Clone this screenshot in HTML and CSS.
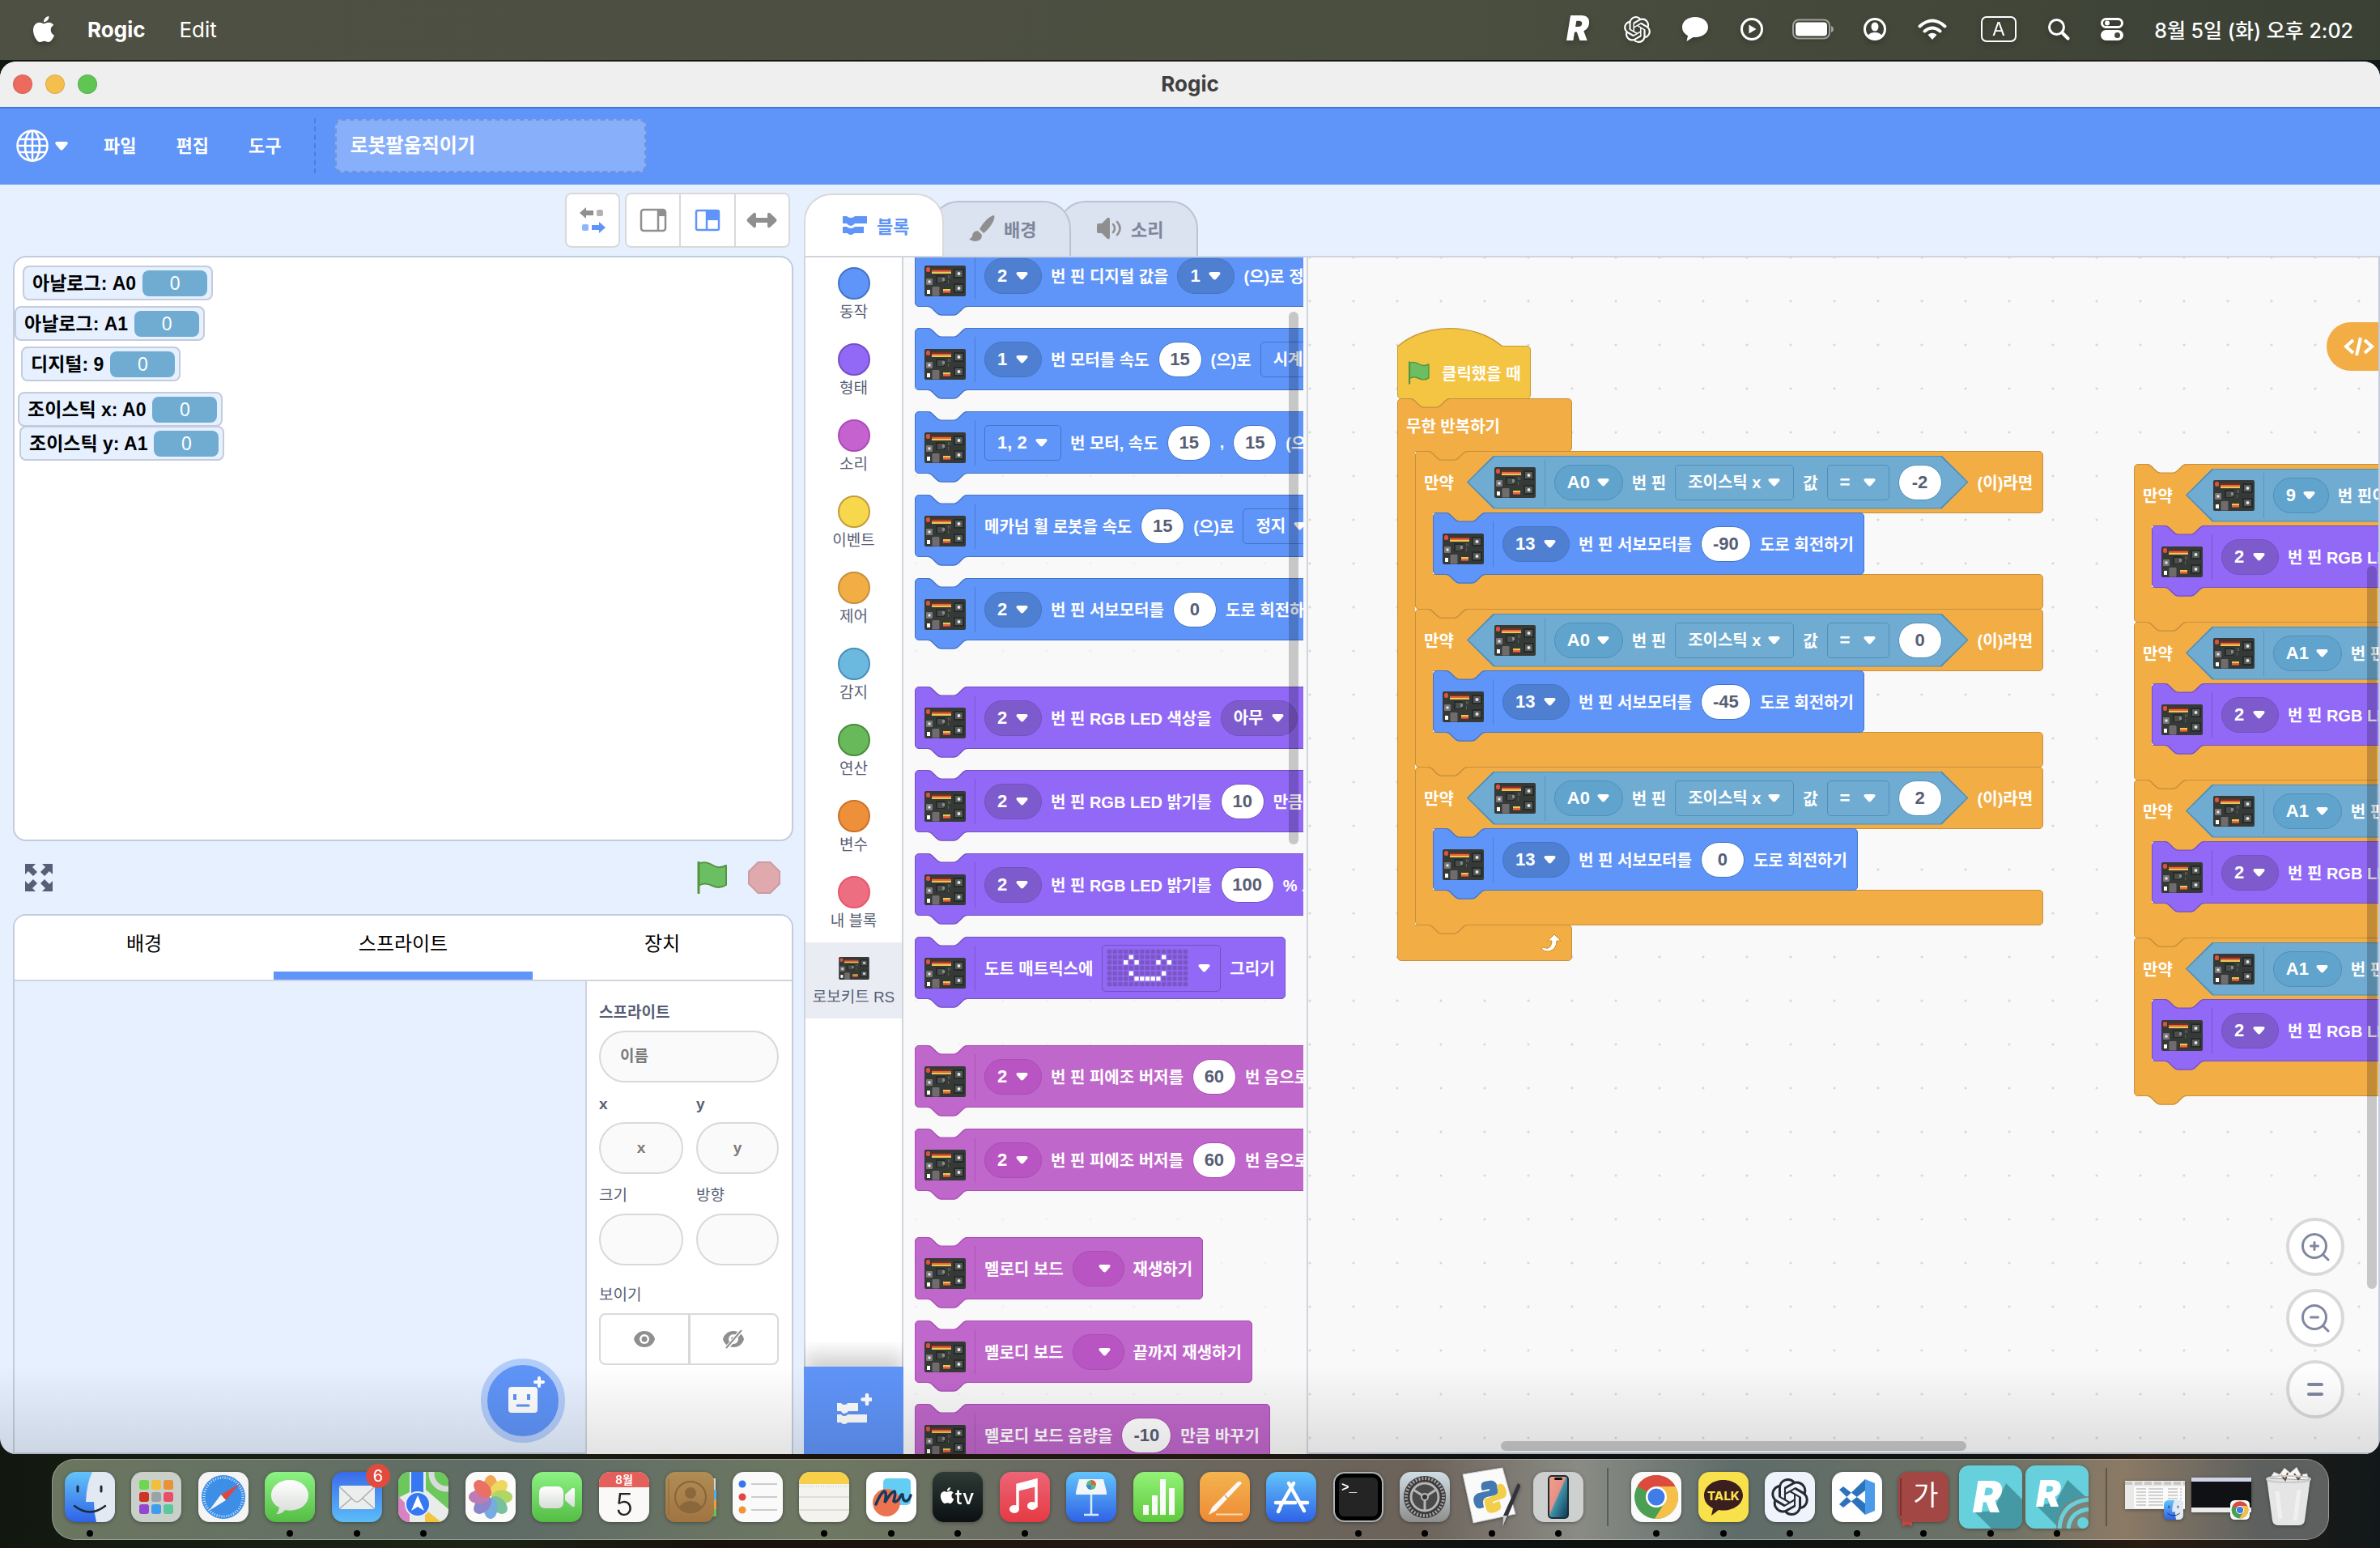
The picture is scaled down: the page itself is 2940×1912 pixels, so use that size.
FILE: index.html
```html
<!DOCTYPE html>
<html lang="ko">
<head>
<meta charset="utf-8">
<title>Rogic</title>
<link rel="stylesheet" href="styles.css">
</head>
<body>
<svg class="defs" aria-hidden="true">
  <defs>
    <linearGradient id="g-green" x1="0" y1="0" x2="0" y2="1"><stop offset="0" stop-color="#8cf283"/><stop offset="1" stop-color="#54bd44"/></linearGradient>
    <linearGradient id="g-white" x1="0" y1="0" x2="0" y2="1"><stop offset="0" stop-color="#fff"/><stop offset="1" stop-color="#d8dcd8"/></linearGradient>
    <linearGradient id="g-blue" x1="0" y1="0" x2="0" y2="1"><stop offset="0" stop-color="#62c4fb"/><stop offset="1" stop-color="#2f62e6"/></linearGradient>
    <linearGradient id="g-mail" x1="0" y1="0" x2="0" y2="1"><stop offset="0" stop-color="#3a6bea"/><stop offset="1" stop-color="#5cbdf8"/></linearGradient>
    <linearGradient id="g-red" x1="0" y1="0" x2="0" y2="1"><stop offset="0" stop-color="#ed6577"/><stop offset="1" stop-color="#e53a43"/></linearGradient>
    <linearGradient id="g-orange" x1="0" y1="0" x2="0" y2="1"><stop offset="0" stop-color="#f4b44e"/><stop offset="1" stop-color="#ee8a35"/></linearGradient>
    <linearGradient id="g-num" x1="0" y1="0" x2="0" y2="1"><stop offset="0" stop-color="#92f277"/><stop offset="1" stop-color="#5fc93d"/></linearGradient>
    <linearGradient id="g-brown" x1="0" y1="0" x2="0" y2="1"><stop offset="0" stop-color="#b08d55"/><stop offset="1" stop-color="#a07441"/></linearGradient>
    <linearGradient id="g-steel" x1="0" y1="0" x2="0" y2="1"><stop offset="0" stop-color="#cfdde4"/><stop offset="1" stop-color="#8e8e8e"/></linearGradient>
    <linearGradient id="g-dark" x1="0" y1="0" x2="0" y2="1"><stop offset="0" stop-color="#2d3a36"/><stop offset="1" stop-color="#0c1012"/></linearGradient>
    <linearGradient id="g-phone" x1="0" y1="0" x2="1" y2="1"><stop offset="0" stop-color="#f0a088"/><stop offset=".45" stop-color="#e88f86"/><stop offset=".5" stop-color="#3f93a8"/><stop offset="1" stop-color="#0d3a57"/></linearGradient>
    <clipPath id="tile"><rect width="62" height="62" rx="14"/></clipPath>
  </defs>
  <symbol id="board" viewBox="0 0 51 38">
    <rect width="51" height="38" rx="2" fill="#353a37"/>
    <rect x="2" y="2" width="5" height="6" rx="2" fill="#e2503a"/>
    <path d="M9 4h24v2H9z" fill="#7a2f25"/><path d="M9 6h24v2H9z" fill="#e8663c"/><path d="M9 8h24v2H9z" fill="#e9c950"/>
    <rect x="2" y="16" width="8" height="8" rx="1" fill="#77757a"/><rect x="4.500" y="18.500" width="3" height="3" fill="#e8e8e8"/>
    <path d="M14 12h11v10H14z" fill="#262a28"/><path d="M16 14h8v7h-8z" fill="#4a4e4d"/><path d="M22 15h3v4h-3z" fill="#8b8b8b"/>
    <path d="M29 12h1v4h-1zM31 12h1v4h-1zM29 18h1v4h-1z" fill="#5d615f"/>
    <path d="M3 30h4v5H3z" fill="#fffef6"/><rect x="9.500" y="26" width="9" height="11.500" rx="1" fill="#706b6d"/>
    <path d="M23 29h9v2h-9z" fill="#e9c950"/><path d="M23 31h9v2h-9z" fill="#e8663c"/><path d="M23 33h9v1h-9z" fill="#c9413a"/>
    <path d="M36 4h13v12H36zM36 22h13v12H36z" fill="#262a28"/><path d="M38 6h9v8h-9zM38 24h9v8h-9z" fill="#555958"/>
    <circle cx="42.500" cy="10" r="2" fill="#e5e5e5"/><circle cx="42.500" cy="28" r="2" fill="#e5e5e5"/>
  </symbol>
  <symbol id="bump" viewBox="0 0 36 9">
    <path d="M0 0v.4c2 0 3 1 4 2l4 4c1 1 2 2 4 2h12c2 0 3-1 4-2l4-4c1-1 2-2 4-2V0z"/>
    <path d="M0 .4c2 0 3 1 4 2l4 4c1 1 2 2 4 2h12c2 0 3-1 4-2l4-4c1-1 2-2 4-2" class="edge"/>
  </symbol>
  <symbol id="flag" viewBox="0 0 40 40">
    <path d="M3 3c7-4 13-1 18 2s10 3 16 0v24c-6 4-11 4-17 1S9 26 3 30z" fill="#6bbf62" stroke="#54953f" stroke-width="2" stroke-linejoin="round"/>
    <path d="M3 1v38" stroke="#54953f" stroke-width="3" stroke-linecap="round"/>
  </symbol>
  <symbol id="blocks" viewBox="0 0 32 24">
    <path d="M1 1h5q2 2 5 2t5-2h15v9H16q-2 3-5 3t-5-3H1zM1 14h5q2 2 5 2t5-2h11v8H15q-1 2-4 2t-4-2H1z"/>
  </symbol>
  <symbol id="gpt" viewBox="0 0 24 24"><path d="M22.282 9.821a5.985 5.985 0 0 0-.516-4.91 6.046 6.046 0 0 0-6.510-2.900A6.065 6.065 0 0 0 4.981 4.182a5.985 5.985 0 0 0-3.998 2.900 6.046 6.046 0 0 0 .743 7.097 5.980 5.980 0 0 0 .511 4.910 6.051 6.051 0 0 0 6.515 2.900A5.985 5.985 0 0 0 13.260 24a6.056 6.056 0 0 0 5.772-4.206 5.989 5.989 0 0 0 3.998-2.900 6.056 6.056 0 0 0-.748-7.073zm-9.022 12.608a4.476 4.476 0 0 1-2.876-1.041l.142-.080 4.778-2.758a.795.795 0 0 0 .393-.681v-6.737l2.020 1.169a.071.071 0 0 1 .038.052v5.583a4.504 4.504 0 0 1-4.495 4.494zm-9.661-4.125a4.471 4.471 0 0 1-.535-3.014l.142.085 4.783 2.758a.771.771 0 0 0 .781 0l5.843-3.369v2.332a.080.080 0 0 1-.033.062L9.740 19.950a4.499 4.499 0 0 1-6.141-1.646zM2.341 7.896a4.485 4.485 0 0 1 2.366-1.973V11.600a.766.766 0 0 0 .388.677l5.814 3.354-2.020 1.169a.076.076 0 0 1-.071 0l-4.830-2.787A4.504 4.504 0 0 1 2.341 7.872zm16.596 3.856L13.104 8.364 15.119 7.200a.076.076 0 0 1 .071 0l4.830 2.791a4.494 4.494 0 0 1-.677 8.104v-5.677a.790.790 0 0 0-.407-.667zm2.011-3.023l-.142-.085-4.774-2.782a.776.776 0 0 0-.785 0L9.409 9.230V6.897a.066.066 0 0 1 .028-.062l4.830-2.787a4.499 4.499 0 0 1 6.680 4.660zM8.307 12.863l-2.020-1.164a.080.080 0 0 1-.038-.057V6.074a4.499 4.499 0 0 1 7.376-3.454l-.142.081L8.704 5.459a.795.795 0 0 0-.393.681zm1.098-2.365l2.602-1.500 2.607 1.500v2.999l-2.597 1.500-2.607-1.500z"/></symbol>
  <symbol id="apple" viewBox="0 0 24 24"><path d="M12.152 6.896c-.948 0-2.415-1.078-3.960-1.040-2.040.027-3.910 1.183-4.961 3.014-2.117 3.675-.546 9.103 1.519 12.090 1.013 1.454 2.208 3.090 3.792 3.039 1.520-.065 2.090-.987 3.935-.987 1.831 0 2.350.987 3.960.948 1.637-.026 2.676-1.480 3.676-2.948 1.156-1.688 1.636-3.325 1.662-3.415-.039-.013-3.182-1.221-3.220-4.857-.026-3.040 2.480-4.494 2.597-4.559-1.429-2.090-3.623-2.324-4.390-2.376-2-.156-3.675 1.090-4.610 1.090zM15.530 3.830c.843-1.012 1.400-2.427 1.245-3.830-1.207.052-2.662.805-3.532 1.818-.780.896-1.454 2.338-1.273 3.714 1.338.104 2.715-.688 3.559-1.701"/></symbol>
  <symbol id="finder" viewBox="0 0 62 62">
    <rect width="62" height="62" rx="14" fill="url(#g-blue)"/>
    <path d="M34 0h14a14 14 0 0 1 14 14v34a14 14 0 0 1-14 14H39q-3-12-3-25H26Q27 14 34 0z" fill="#e3e9f2"/>
    <path d="M16 18v6M45 18v6" stroke="#1d2a3c" stroke-width="3" stroke-linecap="round"/>
    <path d="M12 42q19 15 38 0" fill="none" stroke="#1d2a3c" stroke-width="2.500" stroke-linecap="round"/>
  </symbol>
  <symbol id="chrome" viewBox="0 0 62 62">
    <rect width="62" height="62" rx="14" fill="#fafafa"/>
    <circle cx="31" cy="31" r="27" fill="#4a9f53"/>
    <path d="M31 31L7.600 17.500A27 27 0 0 1 54.400 17.500z" fill="#dc4b3e"/><path d="M31 18h23.700A27 27 0 0 1 29 58L42 37z" fill="#f4c04a"/>
    <circle cx="31" cy="31" r="13" fill="#fff"/><circle cx="31" cy="31" r="10.500" fill="#3f7ce8"/>
  </symbol>
</svg>

<header class="menubar">
  <nav class="menubar-left">
    <svg class="apple" width="32" height="32"><use href="#apple"/></svg>
    <strong>Rogic</strong>
    <span>Edit</span>
  </nav>
  <div class="status">
    <svg width="36" height="34" viewBox="0 0 36 34"><text x="3" y="31" class="rlogo" font-size="42">R</text></svg>
    <svg width="33" height="33"><use href="#gpt"/></svg>
    <svg width="34" height="32" viewBox="0 0 34 32"><path d="M17 1C8 1 1 6 1 13.500c0 5 3 8.500 7 10.500l-1.500 7 8-5H17c9 0 16-5 16-12.500S26 1 17 1z"/></svg>
    <svg width="30" height="30" viewBox="0 0 30 30"><circle cx="15" cy="15" r="12.500" class="line"/><path d="M11.500 9.500l9 5.500-9 5.500z"/></svg>
    <svg class="battery" width="52" height="26" viewBox="0 0 52 26"><rect x="1" y="1.500" width="45" height="23" rx="7" class="line thin"/><rect x="4" y="4.500" width="39" height="17" rx="4"/><path d="M48 9q3 1 3 4t-3 4z" opacity=".5"/></svg>
    <svg width="30" height="30" viewBox="0 0 30 30"><circle cx="15" cy="15" r="12.500" class="line"/><ellipse cx="15" cy="12" rx="4.500" ry="5.500"/><path d="M6 24q2-5 9-5t9 5q-4 4-9 4t-9-4z"/></svg>
    <svg class="wifi" width="36" height="28" viewBox="0 0 36 28"><path d="M2.500 10.500q15.500-14 31 0M8.500 16.500q9.500-8 19 0" class="line wide"/><path d="M12.500 21q5.500-4.500 11 0L18 27z"/></svg>
    <svg width="44" height="32" viewBox="0 0 44 32"><rect x="1" y="1" width="42" height="30" rx="6" class="line thin-full"/><text x="22" y="24" text-anchor="middle" font-size="23">A</text></svg>
    <svg width="28" height="28" viewBox="0 0 28 28"><circle cx="11.500" cy="11.500" r="9" class="line"/><path d="M18.500 18.500l7 7" class="line wide"/></svg>
    <svg width="28" height="30" viewBox="0 0 28 30"><rect x="1.500" y="2.500" width="25" height="10" rx="5" class="line"/><circle cx="8" cy="7.500" r="3"/><rect x="0" y="16" width="28" height="13" rx="6.500"/><circle cx="20.500" cy="22.500" r="3.500" fill="#43483a"/></svg>
    <time>8월 5일 (화) 오후 2:02</time>
  </div>
</header>

<main class="window">
  <div class="titlebar">
    <div class="lights"><i class="red"></i><i class="amber"></i><i class="green"></i></div>
    <h1>Rogic</h1>
  </div>

  <nav class="appbar">
    <button class="lang" aria-label="언어">
      <svg width="42" height="42" viewBox="0 0 42 42"><g fill="none" stroke="#fff" stroke-width="2.500"><circle cx="21" cy="21" r="18.500"/><ellipse cx="21" cy="21" rx="9" ry="18.500"/><path d="M21 2v38M3 21h36M5 13h32M5 29h32"/></g></svg>
      <svg width="16" height="11" viewBox="0 0 16 11"><path d="M2 0h12q3 1 1 3.500L9.500 10q-1.500 1-3 0L1 3.500Q-1 1 2 0z" fill="#fff"/></svg>
    </button>
    <button>파일</button>
    <button>편집</button>
    <button class="last">도구</button>
    <input class="project" type="text" value="로봇팔움직이기" aria-label="프로젝트 이름">
  </nav>

  <div class="workarea">
    <section class="left">
      <div class="stage-tools">
        <button class="tool" aria-label="업로드 모드"><svg width="34" height="34" viewBox="0 0 34 34"><path d="M1 8l8-7v4h9v6H9v4z" fill="#8f8f8f"/><rect x="22" y="4" width="8" height="8" rx="2" fill="#b3b3b3"/><rect x="4" y="22" width="8" height="8" rx="2" fill="#8fb5fa"/><path d="M33 26l-8-7v4h-9v6h9v4z" fill="#5f94f8"/></svg></button>
        <div class="tool-group">
          <button class="tool" aria-label="작은 무대"><svg width="34" height="30" viewBox="0 0 34 30"><g fill="none" stroke="#8f8f8f" stroke-width="2.500"><rect x="2" y="2" width="30" height="26" rx="3"/><path d="M23 2v26"/></g><path d="M23 2h9v8h-9z" fill="#8f8f8f"/></svg></button>
          <button class="tool" aria-label="큰 무대"><svg width="32" height="28" viewBox="0 0 32 28"><g fill="none" stroke="#5f94f8" stroke-width="2.500"><rect x="2" y="2" width="28" height="24" rx="2"/><path d="M15 2v24"/></g><path d="M15 2h15v12H15z" fill="#5f94f8"/></svg></button>
          <button class="tool" aria-label="넓게"><svg width="38" height="20" viewBox="0 0 38 20"><path d="M1 8.500L9 1q3-1 3 2v4h14V3q0-3 3-2l8 7.500q1 1.500 0 3L29 19q-3 1-3-2v-4H12v4q0 3-3 2l-8-7.500q-1-1.500 0-3z" fill="#8f8f8f"/></svg></button>
        </div>
      </div>
      <div class="stage">
        <div class="monitor m1">아날로그: A0 <output>0</output></div>
        <div class="monitor m2">아날로그: A1 <output>0</output></div>
        <div class="monitor m3">디지털: 9 <output>0</output></div>
        <div class="monitor m4">조이스틱 x: A0 <output>0</output></div>
        <div class="monitor m5">조이스틱 y: A1 <output>0</output></div>
      </div>
      <div class="stage-foot">
        <button aria-label="전체 화면"><svg width="36" height="36" viewBox="0 0 36 36" fill="#575e75"><path id="fs" d="M1 1h13l-4 4 6 6-5 5-6-6-4 4z"/><use href="#fs" transform="rotate(90 18 18)"/><use href="#fs" transform="rotate(180 18 18)"/><use href="#fs" transform="rotate(270 18 18)"/></svg></button>
        <span class="grow"></span>
        <button aria-label="시작하기"><svg width="40" height="40"><use href="#flag"/></svg></button>
        <button aria-label="멈추기"><svg width="40" height="40" viewBox="0 0 40 40"><path d="M12.500 1h15L39 12.500v15L27.500 39h-15L1 27.500v-15z" fill="#dfa9ad" stroke="#cd9ba1" stroke-width="2"/></svg></button>
      </div>
      <div class="sprites">
        <div class="sprite-tabs"><button>배경</button><button class="on">스프라이트</button><button>장치</button></div>
        <div class="sprite-body">
          <div class="sprite-list"><button class="add-sprite" aria-label="스프라이트 추가"><svg width="46" height="54" viewBox="0 0 46 54"><rect x="1" y="14" width="36" height="32" rx="4" fill="#fff"/><path d="M9 23v7M26 23v7" stroke="#5f94f8" stroke-width="4"/><path d="M12 37h14" stroke="#5f94f8" stroke-width="3" stroke-linecap="round"/><path d="M39 3v10M34 8h10" stroke="#fff" stroke-width="4" stroke-linecap="round"/></svg></button></div>
          <form class="props">
            <label class="wide-field"><b>스프라이트</b><input type="text" placeholder="이름"></label>
            <label><b>x</b><input type="text" placeholder="x"></label>
            <label><b>y</b><input type="text" placeholder="y"></label>
            <label><span>크기</span><input type="text"></label>
            <label><span>방향</span><input type="text"></label>
            <div class="visible"><span>보이기</span>
              <div class="eyes">
                <button type="button" aria-label="보이기"><svg width="28" height="22" viewBox="0 0 28 22"><path d="M14 1C7 1 2 6 1 11c1 5 6 10 13 10s12-5 13-10C26 6 21 1 14 1z" fill="#8f8f8f"/><circle cx="14" cy="11" r="6" fill="#fff"/><circle cx="14" cy="11" r="3.500" fill="#8f8f8f"/></svg></button>
                <button type="button" aria-label="숨기기"><svg width="28" height="24" viewBox="0 0 28 24"><path d="M14 2C7 2 2 7 1 12c1 5 6 10 13 10s12-5 13-10C26 7 21 2 14 2z" fill="#8f8f8f"/><circle cx="14" cy="12" r="6" fill="#fff"/><circle cx="14" cy="12" r="3" fill="#8f8f8f"/><path d="M4 25L24 1" stroke="#fff" stroke-width="5"/><path d="M5 23L24 1" stroke="#8f8f8f" stroke-width="2"/></svg></button>
              </div>
            </div>
          </form>
        </div>
      </div>
    </section>

    <section class="editor">
      <div class="tabs">
        <button class="on"><svg width="32" height="24" fill="#5f94f8"><use href="#blocks"/></svg>블록</button>
        <button><svg width="32" height="34" viewBox="0 0 32 34" fill="#8f8f8f"><path d="M31 1q2 4-5 14-5 6-8 8l-5-5q3-6 9-12 6-5 9-5zM11 20l5 5q0 8-9 8-4 0-7-3 4-1 4-4 1-6 7-6z"/></svg>배경</button>
        <button><svg width="32" height="28" viewBox="0 0 32 28"><path d="M1 10q0-2 2-2h4l7-7q3-1 3 2v22q0 3-3 2l-7-7H3q-2 0-2-2z" fill="#8f8f8f"/><path d="M21 9q4 5 0 10M26 6q7 8 0 16" fill="none" stroke="#8f8f8f" stroke-width="2.500" stroke-linecap="round"/></svg>소리</button>
      </div>
      <div class="panel">
        <nav class="cats">
          <a href="#motion"><i class="motion"></i>동작</a>
          <a href="#looks"><i class="looks"></i>형태</a>
          <a href="#sound"><i class="sound"></i>소리</a>
          <a href="#event"><i class="event"></i>이벤트</a>
          <a href="#control"><i class="control"></i>제어</a>
          <a href="#sense"><i class="sense2"></i>감지</a>
          <a href="#ops"><i class="ops"></i>연산</a>
          <a href="#vars"><i class="vars"></i>변수</a>
          <a href="#mine"><i class="mine"></i>내 블록</a>
          <a href="#robokit" class="on"><svg width="38" height="28"><use href="#board"/></svg>로보키트 RS</a>
          <button class="extend" aria-label="확장 기능 추가"><svg width="44" height="38" viewBox="0 0 44 38" fill="#fff"><path d="M1 12h5q1 2 4 2t4-2h13v10H15q-2 3-5 3t-4-3H1zM1 26h5q1 2 4 2t4-2h24v10H14q-1 2-4 2t-4-2H1z"/><path d="M38 2v11M32.500 7.500h11" stroke="#fff" stroke-width="4.500" stroke-linecap="round"/></svg></button>
        </nav>

        <div class="palette">
          <div class="list">
            <div class="group motion">
              <div class="block"><svg class="bump top"><use href="#bump"/></svg><svg class="board"><use href="#board"/></svg><hr><select><option>2</option></select>번 핀 디지털 값을<select><option>1</option></select>(으)로 정하기<svg class="bump"><use href="#bump"/></svg></div>
              <div class="block"><svg class="bump top"><use href="#bump"/></svg><svg class="board"><use href="#board"/></svg><hr><select><option>1</option></select>번 모터를 속도<input value="15">(으)로<select class="sq ko"><option>시계</option></select><svg class="bump"><use href="#bump"/></svg></div>
              <div class="block"><svg class="bump top"><use href="#bump"/></svg><svg class="board"><use href="#board"/></svg><hr><select class="sq"><option>1, 2</option></select>번 모터, 속도<input value="15">,<input value="15">(으)로<svg class="bump"><use href="#bump"/></svg></div>
              <div class="block"><svg class="bump top"><use href="#bump"/></svg><svg class="board"><use href="#board"/></svg><hr>메카넘 휠 로봇을 속도<input value="15">(으)로<select class="sq ko"><option>정지</option></select><svg class="bump"><use href="#bump"/></svg></div>
              <div class="block"><svg class="bump top"><use href="#bump"/></svg><svg class="board"><use href="#board"/></svg><hr><select><option>2</option></select>번 핀 서보모터를<input value="0">도로 회전하기<svg class="bump"><use href="#bump"/></svg></div>
            </div>
            <div class="group looks">
              <div class="block"><svg class="bump top"><use href="#bump"/></svg><svg class="board"><use href="#board"/></svg><hr><select><option>2</option></select>번 핀 RGB LED 색상을<select class="ko"><option>아무</option></select>색<svg class="bump"><use href="#bump"/></svg></div>
              <div class="block"><svg class="bump top"><use href="#bump"/></svg><svg class="board"><use href="#board"/></svg><hr><select><option>2</option></select>번 핀 RGB LED 밝기를<input value="10">만큼<svg class="bump"><use href="#bump"/></svg></div>
              <div class="block"><svg class="bump top"><use href="#bump"/></svg><svg class="board"><use href="#board"/></svg><hr><select><option>2</option></select>번 핀 RGB LED 밝기를<input class="w3" value="100">% 로<svg class="bump"><use href="#bump"/></svg></div>
              <div class="block"><svg class="bump top"><use href="#bump"/></svg><svg class="board"><use href="#board"/></svg><hr>도트 매트릭스에<button class="matrix" aria-label="도트 모양"><svg width="101" height="47" viewBox="0 0 15 7">
                <defs><pattern id="cells" width="1" height="1" patternUnits="userSpaceOnUse"><rect x=".1" y=".1" width=".8" height=".8" rx=".12" fill="#7a56c4"/></pattern></defs>
                <rect width="15" height="7" fill="url(#cells)"/>
                <path fill="#fff" d="M4.100 1.100h.8v.8h-.8zM10.100 1.100h.8v.8h-.8zM3.100 2.100h.8v.8h-.8zM5.100 2.100h.8v.8h-.8zM9.100 2.100h.8v.8h-.8zM11.100 2.100h.8v.8h-.8zM4.100 4.100h.8v.8h-.8zM10.100 4.100h.8v.8h-.8zM5.100 5.100h.8v.8h-.8zM6.100 5.100h.8v.8h-.8zM7.100 5.100h.8v.8h-.8zM8.100 5.100h.8v.8h-.8zM9.100 5.100h.8v.8h-.8z"/></svg></button>그리기<svg class="bump"><use href="#bump"/></svg></div>
            </div>
            <div class="group sound">
              <div class="block"><svg class="bump top"><use href="#bump"/></svg><svg class="board"><use href="#board"/></svg><hr><select><option>2</option></select>번 핀 피에조 버저를<input value="60">번 음으로<svg class="bump"><use href="#bump"/></svg></div>
              <div class="block"><svg class="bump top"><use href="#bump"/></svg><svg class="board"><use href="#board"/></svg><hr><select><option>2</option></select>번 핀 피에조 버저를<input value="60">번 음으로<svg class="bump"><use href="#bump"/></svg></div>
            </div>
            <div class="group sound">
              <div class="block"><svg class="bump top"><use href="#bump"/></svg><svg class="board"><use href="#board"/></svg><hr>멜로디 보드<select class="empty" aria-label="멜로디"><option></option></select>재생하기<svg class="bump"><use href="#bump"/></svg></div>
              <div class="block"><svg class="bump top"><use href="#bump"/></svg><svg class="board"><use href="#board"/></svg><hr>멜로디 보드<select class="empty" aria-label="멜로디"><option></option></select>끝까지 재생하기<svg class="bump"><use href="#bump"/></svg></div>
              <div class="block"><svg class="bump top"><use href="#bump"/></svg><svg class="board"><use href="#board"/></svg><hr>멜로디 보드 음량을<input class="w2" value="-10">만큼 바꾸기<svg class="bump"><use href="#bump"/></svg></div>
            </div>
          </div>
          <i class="scroll"></i>
        </div>

        <div class="canvas">
          <div class="script s1">
            <div class="hat event"><svg class="dome" viewBox="0 0 96 17" preserveAspectRatio="none"><path d="M.4 17C25-5 71-5 96 17z"/><path d="M.4 17C25-5 71-5 96 17" class="edge"/></svg><svg width="28" height="29"><use href="#flag"/></svg>클릭했을 때</div>
            <div class="c forever control">
              <div class="row"><svg class="bump top"><use href="#bump"/></svg>무한 반복하기</div>
              <div class="mouth"><div class="stack">
                <div class="c control">
                  <div class="row"><svg class="bump top"><use href="#bump"/></svg>만약<div class="hex sense"><svg class="board"><use href="#board"/></svg><hr><select><option>A0</option></select>번 핀<select class="sq ko"><option>조이스틱 x</option></select>값<select class="sq op"><option>=</option></select><input value="-2"></div>(이)라면</div>
                  <div class="mouth"><div class="block motion"><svg class="bump top"><use href="#bump"/></svg><svg class="board"><use href="#board"/></svg><hr><select><option>13</option></select>번 핀 서보모터를<input class="w2" value="-90">도로 회전하기<svg class="bump"><use href="#bump"/></svg></div></div>
                  <div class="foot"><svg class="bump"><use href="#bump"/></svg></div>
                </div>
                <div class="c control">
                  <div class="row"><svg class="bump top"><use href="#bump"/></svg>만약<div class="hex sense"><svg class="board"><use href="#board"/></svg><hr><select><option>A0</option></select>번 핀<select class="sq ko"><option>조이스틱 x</option></select>값<select class="sq op"><option>=</option></select><input value="0"></div>(이)라면</div>
                  <div class="mouth"><div class="block motion"><svg class="bump top"><use href="#bump"/></svg><svg class="board"><use href="#board"/></svg><hr><select><option>13</option></select>번 핀 서보모터를<input class="w2" value="-45">도로 회전하기<svg class="bump"><use href="#bump"/></svg></div></div>
                  <div class="foot"><svg class="bump"><use href="#bump"/></svg></div>
                </div>
                <div class="c control">
                  <div class="row"><svg class="bump top"><use href="#bump"/></svg>만약<div class="hex sense"><svg class="board"><use href="#board"/></svg><hr><select><option>A0</option></select>번 핀<select class="sq ko"><option>조이스틱 x</option></select>값<select class="sq op"><option>=</option></select><input value="2"></div>(이)라면</div>
                  <div class="mouth"><div class="block motion"><svg class="bump top"><use href="#bump"/></svg><svg class="board"><use href="#board"/></svg><hr><select><option>13</option></select>번 핀 서보모터를<input value="0">도로 회전하기<svg class="bump"><use href="#bump"/></svg></div></div>
                  <div class="foot"><svg class="bump"><use href="#bump"/></svg></div>
                </div>
              </div></div>
              <div class="foot"><svg class="loop" width="26" height="24" viewBox="0 0 26 24"><path d="M17 1l8 8h-5q0 10-9 13-6 1-10-3 1-2 3-2 5 3 8-1 2-3 2-7H9z" fill="#fff" stroke="#cf8b17" stroke-width="1"/></svg></div>
            </div>
          </div>

          <div class="script s2">
            <div class="c control first">
              <div class="row"><svg class="bump top"><use href="#bump"/></svg>만약<div class="hex sense"><svg class="board"><use href="#board"/></svg><hr><select><option>9</option></select>번 핀이</div></div>
              <div class="mouth"><div class="block looks"><svg class="bump top"><use href="#bump"/></svg><svg class="board"><use href="#board"/></svg><hr><select><option>2</option></select>번 핀 RGB LED<svg class="bump"><use href="#bump"/></svg></div></div>
              <div class="foot"><svg class="bump"><use href="#bump"/></svg></div>
            </div>
            <div class="c control">
              <div class="row"><svg class="bump top"><use href="#bump"/></svg>만약<div class="hex sense"><svg class="board"><use href="#board"/></svg><hr><select><option>A1</option></select>번 핀</div></div>
              <div class="mouth"><div class="block looks"><svg class="bump top"><use href="#bump"/></svg><svg class="board"><use href="#board"/></svg><hr><select><option>2</option></select>번 핀 RGB LED<svg class="bump"><use href="#bump"/></svg></div></div>
              <div class="foot"><svg class="bump"><use href="#bump"/></svg></div>
            </div>
            <div class="c control">
              <div class="row"><svg class="bump top"><use href="#bump"/></svg>만약<div class="hex sense"><svg class="board"><use href="#board"/></svg><hr><select><option>A1</option></select>번 핀</div></div>
              <div class="mouth"><div class="block looks"><svg class="bump top"><use href="#bump"/></svg><svg class="board"><use href="#board"/></svg><hr><select><option>2</option></select>번 핀 RGB LED<svg class="bump"><use href="#bump"/></svg></div></div>
              <div class="foot"><svg class="bump"><use href="#bump"/></svg></div>
            </div>
            <div class="c control">
              <div class="row"><svg class="bump top"><use href="#bump"/></svg>만약<div class="hex sense"><svg class="board"><use href="#board"/></svg><hr><select><option>A1</option></select>번 핀</div></div>
              <div class="mouth"><div class="block looks"><svg class="bump top"><use href="#bump"/></svg><svg class="board"><use href="#board"/></svg><hr><select><option>2</option></select>번 핀 RGB LED<svg class="bump"><use href="#bump"/></svg></div></div>
              <div class="foot"><svg class="bump"><use href="#bump"/></svg></div>
            </div>
          </div>

          <button class="code" aria-label="코드 보기"><svg width="38" height="24" viewBox="0 0 38 24" fill="none" stroke="#fff" stroke-width="4"><path d="M12 4L3 12l9 8M26 4l9 8-9 8M21 1l-5 22"/></svg></button>
          <div class="zoom">
            <button aria-label="확대"><svg width="36" height="36" viewBox="0 0 36 36" fill="none" stroke="#7f88a0" stroke-width="3" stroke-linecap="round"><circle cx="17" cy="17" r="14.500"/><path d="M28 28l6 6M17 12.500v9M12.500 17h9"/></svg></button>
            <button aria-label="축소"><svg width="36" height="36" viewBox="0 0 36 36" fill="none" stroke="#7f88a0" stroke-width="3" stroke-linecap="round"><circle cx="17" cy="17" r="14.500"/><path d="M28 28l6 6M12.500 17h9"/></svg></button>
            <button aria-label="원래 크기"><svg width="36" height="36" viewBox="0 0 36 36" fill="none" stroke="#7f88a0" stroke-width="4" stroke-linecap="round"><path d="M10 12h16M10 24h16"/></svg></button>
          </div>
          <i class="vbar"></i><i class="hbar"></i>
        </div>
      </div>
    </section>
  </div>
</main>

<footer class="dock">
  <div class="app run"><svg><use href="#finder"/></svg></div>
  <div class="app"><svg viewBox="0 0 62 62"><rect width="62" height="62" rx="14" fill="#c9cfc9"/><g><rect x="10" y="10" width="12" height="12" rx="3" fill="#6fd650"/><rect x="25" y="10" width="12" height="12" rx="3" fill="#f2bf3b"/><rect x="40" y="10" width="12" height="12" rx="3" fill="#e8923a"/><rect x="10" y="25" width="12" height="12" rx="3" fill="#cf3426"/><rect x="25" y="25" width="12" height="12" rx="3" fill="#9ba3a8"/><rect x="40" y="25" width="12" height="12" rx="3" fill="#ea4f6a"/><rect x="10" y="40" width="12" height="12" rx="3" fill="#9346cf"/><rect x="25" y="40" width="12" height="12" rx="3" fill="#3f9df0"/><rect x="40" y="40" width="12" height="12" rx="3" fill="#5cc79b"/></g></svg></div>
  <div class="app"><svg viewBox="0 0 62 62"><rect width="62" height="62" rx="14" fill="#f4f4f4"/><circle cx="31" cy="31" r="27" fill="#3d8ee6"/><circle cx="31" cy="31" r="24" fill="none" stroke="#d8ebfb" stroke-width="3" stroke-dasharray="1 2"/><path d="M51 15L34 35l-6-7z" fill="#e0463d"/><path d="M13 48l15-20 6 7z" fill="#f4f4f4"/></svg></div>
  <div class="app run"><svg viewBox="0 0 62 62"><rect width="62" height="62" rx="14" fill="url(#g-green)"/><path d="M31 10C18 10 8 18 8 29c0 7 4 12 10 15-1 3-1 6-4 8 5 0 9-2 11-5 15 3 29-5 29-18 0-11-10-19-23-19z" fill="url(#g-white)"/></svg></div>
  <div class="app run"><svg viewBox="0 0 62 62"><rect width="62" height="62" rx="14" fill="url(#g-mail)"/><rect x="9" y="17" width="44" height="29" rx="3" fill="#eceeed"/><path d="M10 19l18 17q3 2 6 0l18-17M10 45l15-13M52 45L37 32" fill="none" stroke="#a9adaf" stroke-width="1.500"/></svg><b class="badge">6</b></div>
  <div class="app run"><svg viewBox="0 0 62 62"><g clip-path="url(#tile)"><rect width="62" height="62" fill="#e9ece8"/><path d="M34 0h28v46L34 22z" fill="#6cc85c"/><circle cx="60" cy="2" r="19" fill="#6cc85c" stroke="#d9dadb" stroke-width="7"/><path d="M0 0h14v25L0 32z" fill="#6cc85c"/><path d="M0 30l14 14v18H0z" fill="#d982c3"/><path d="M33 62V46l20 16z" fill="#f3c440"/><path d="M16 0h15v40H16z" fill="#3678f2"/><circle cx="24" cy="40" r="15" fill="#3678f2" stroke="#e9f0fb" stroke-width="2"/><path d="M24 29l8 19-8-5-8 5z" fill="#fff"/></g></svg></div>
  <div class="app"><svg viewBox="0 0 62 62"><rect width="62" height="62" rx="14" fill="#fbfbfa"/><g opacity=".85"><ellipse cx="31" cy="17" rx="8.500" ry="13" fill="#f09a38"/><ellipse cx="31" cy="17" rx="8.500" ry="13" fill="#ecd344" transform="rotate(45 31 31)"/><ellipse cx="31" cy="17" rx="8.500" ry="13" fill="#a5cf4d" transform="rotate(90 31 31)"/><ellipse cx="31" cy="17" rx="8.500" ry="13" fill="#62b790" transform="rotate(135 31 31)"/><ellipse cx="31" cy="17" rx="8.500" ry="13" fill="#5f9fdb" transform="rotate(180 31 31)"/><ellipse cx="31" cy="17" rx="8.500" ry="13" fill="#7a72c4" transform="rotate(225 31 31)"/><ellipse cx="31" cy="17" rx="8.500" ry="13" fill="#b565a8" transform="rotate(270 31 31)"/><ellipse cx="31" cy="17" rx="8.500" ry="13" fill="#e8574a" transform="rotate(315 31 31)"/></g></svg></div>
  <div class="app"><svg viewBox="0 0 62 62"><rect width="62" height="62" rx="14" fill="url(#g-green)"/><rect x="9" y="18" width="30" height="27" rx="7" fill="url(#g-white)"/><path d="M41 28l9-8q3-1 3 2v19q0 3-3 2l-9-8z" fill="url(#g-white)"/></svg></div>
  <div class="app"><svg viewBox="0 0 62 62"><rect width="62" height="62" rx="14" fill="#faf9f7"/><path d="M0 19v-5A14 14 0 0 1 14 0h34a14 14 0 0 1 14 14v5z" fill="#e4605a"/><text x="31" y="15" class="cal">8월</text><text x="31" y="54" class="day">5</text></svg></div>
  <div class="app"><svg viewBox="0 0 62 62"><path d="M58 8h4v14h-4z" fill="#d7d7d7"/><path d="M58 22h5v12h-5z" fill="#52aee8"/><path d="M58 34h5v12h-5z" fill="#ef9b3f"/><path d="M58 46h5v9h-5z" fill="#62c654"/><rect width="60" height="62" rx="12" fill="url(#g-brown)"/><g fill="none" stroke="#87643a" stroke-width="2"><circle cx="31" cy="31" r="19"/></g><circle cx="31" cy="26" r="7" fill="#8a673c"/><path d="M17 44q4-8 14-8t14 8q-6 6-14 6t-14-6z" fill="#8a673c"/><path d="M4 8v46" stroke="#8d6a3c"/></svg></div>
  <div class="app"><svg viewBox="0 0 62 62"><rect width="62" height="62" rx="14" fill="#fbfafa"/><g stroke="#bdbdbd" stroke-width="1.500"><path d="M23 15h32M23 31h32M23 47h32"/></g><circle cx="12" cy="15" r="4.500" fill="#3577f0"/><circle cx="12" cy="31" r="4.500" fill="#e1463f"/><circle cx="12" cy="47" r="4.500" fill="#ef9535"/></svg></div>
  <div class="app run"><svg viewBox="0 0 62 62"><rect width="62" height="62" rx="14" fill="#f4f3ef"/><path d="M0 15v-1A14 14 0 0 1 14 0h34a14 14 0 0 1 14 14v1z" fill="#f8cf48"/><path d="M0 18h62" stroke="#bbb" stroke-dasharray="1 2"/><path d="M0 31h62M0 47h62" stroke="#d8d6d1" stroke-width="1.500"/></svg></div>
  <div class="app run"><svg viewBox="0 0 62 62"><rect width="62" height="62" rx="14" fill="#fff"/><rect x="21" y="8" width="34" height="33" rx="5" fill="#64cdf3"/><ellipse cx="25" cy="38" rx="17" ry="17" fill="#ed7350"/><path d="M12 40q6-14 10-16 4 0 1 14 8-14 12-14 2 1-1 12 2 3 7-3 2-6 4-5 0 9 5 8 3-1 5-7" fill="none" stroke="#16395d" stroke-width="3.500" stroke-linecap="round"/></svg></div>
  <div class="app run"><svg viewBox="0 0 62 62"><rect width="62" height="62" rx="14" fill="url(#g-dark)"/><use href="#apple" x="8" y="19" width="20" height="20" fill="#fff"/><text x="28" y="40" font-size="25" fill="#fff" font-family="Inter" font-weight="500">tv</text></svg></div>
  <div class="app run"><svg viewBox="0 0 62 62"><rect width="62" height="62" rx="14" fill="url(#g-red)"/><path d="M22 44V16l23-6v34" fill="none" stroke="#fff" stroke-width="3.500"/><path d="M21 15l25-6v9l-25 6z" fill="#fff"/><ellipse cx="18" cy="46" rx="6" ry="5" fill="#fff"/><ellipse cx="40" cy="42" rx="6" ry="5" fill="#fff"/></svg></div>
  <div class="app"><svg viewBox="0 0 62 62"><rect width="62" height="62" rx="14" fill="url(#g-blue)"/><path d="M31 27v25M22 53h18" stroke="#dce9f8" stroke-width="2.500"/><path d="M16 9h30l4 16v3H12v-3z" fill="#f2f6fb"/><circle cx="31" cy="16" r="6" fill="#5cc06b"/><path d="M31 10a6 6 0 0 1 6 6h-6z" fill="#ea5a4b"/><path d="M31 22a6 6 0 0 1-6-6h6z" fill="#3b85e8"/></svg></div>
  <div class="app"><svg viewBox="0 0 62 62"><rect width="62" height="62" rx="14" fill="url(#g-num)"/><path d="M12 41h7v12h-7zM23 29h7v24h-7zM33 9h7v44h-7zM44 20h7v33h-7z" fill="#f8fbf7"/></svg></div>
  <div class="app"><svg viewBox="0 0 62 62"><rect width="62" height="62" rx="14" fill="url(#g-orange)"/><path d="M20 52.500h33" stroke="#fbdcae" stroke-width="2"/><path d="M46 13q4-3 6 1L20 48l-9 5 4-9z" fill="#fbf8f4"/><path d="M31 29l4 4" stroke="#bda183" stroke-width="1.500"/></svg></div>
  <div class="app"><svg viewBox="0 0 62 62"><rect width="62" height="62" rx="14" fill="url(#g-blue)"/><path d="M34 14L18 42M28 14l19 34M12 38h24M43 38h8M17 45l-2 4" stroke="#fff" stroke-width="4.500" stroke-linecap="round"/></svg></div>
  <div class="app run"><svg viewBox="0 0 62 62"><rect width="62" height="62" rx="14" fill="#aab3b5"/><rect x="2" y="2" width="58" height="58" rx="12" fill="#000"/><rect x="7" y="7" width="48" height="48" rx="6" fill="#242424"/><text x="10" y="24" class="prompt">&gt;_</text></svg></div>
  <div class="app run"><svg viewBox="0 0 62 62"><rect width="62" height="62" rx="14" fill="url(#g-steel)"/><circle cx="31" cy="31" r="26" fill="#3a3a3a"/><circle cx="31" cy="31" r="23" fill="none" stroke="#a4a4a4" stroke-width="4" stroke-dasharray="2 2"/><circle cx="31" cy="31" r="17" fill="#4a4a4a" stroke="#b5b5b5" stroke-width="3"/><path d="M31 31L17 22M31 31l14-9M31 31v17" stroke="#b5b5b5" stroke-width="3"/><circle cx="31" cy="31" r="4" fill="#333" stroke="#b5b5b5" stroke-width="2"/></svg></div>
  <div class="app run"><svg viewBox="0 0 62 62"><path d="M-5 3L44-5l16 57L8 63z" fill="#fafafa" stroke="#ccc"/><path d="M27 11c-9 1-10 3-9 10l1 2 9-2v2l-13 3c-6 2-8 6-6 13 2 5 4 7 8 6l4-1-1-6c0-4 2-6 5-7l9-2c4-1 5-3 4-7l-1-6c-1-4-5-6-10-5z" fill="#4379b0"/><path d="M34 50c9-3 9-5 7-12l-1-2-8 3v-2l12-4c5-2 6-6 4-12-2-5-4-7-8-6l-3 1 1 6c1 4-1 6-4 7l-8 3c-4 1-5 3-4 7l2 7c1 4 5 6 10 4z" fill="#f2ce4a"/><path d="M63 14q3 1 3 4L50 56l-6 12 1-14z" fill="#31343c"/><path d="M50 54l-6 14 1-14z" fill="#ccc"/></svg></div>
  <div class="app run"><svg viewBox="0 0 62 62"><rect width="62" height="62" rx="14" fill="#cdd0ce"/><rect x="18" y="4" width="26" height="54" rx="5" fill="#1d2b33"/><rect x="20" y="6" width="22" height="50" rx="3" fill="url(#g-phone)"/><rect x="26" y="7" width="10" height="3" rx="1.500" fill="#111"/></svg></div>
  <i class="sep"></i>
  <div class="app run"><svg><use href="#chrome"/></svg></div>
  <div class="app run"><svg viewBox="0 0 62 62"><rect width="62" height="62" rx="14" fill="#f8e14b"/><path d="M31 10C18 10 7 18 7 29c0 8 5 13 11 16l-2 9 9-7q3 .500 6 .500c13 0 24-8 24-18.500S44 10 31 10z" fill="#3b1f1e"/><text x="31" y="35" class="talk">TALK</text></svg></div>
  <div class="app run"><svg viewBox="0 0 62 62"><rect width="62" height="62" rx="14" fill="#eff3fb"/><use href="#gpt" x="8" y="8" width="46" height="46" fill="#242c33"/></svg></div>
  <div class="app run"><svg viewBox="0 0 62 62"><rect width="62" height="62" rx="14" fill="#fff"/><path d="M41 9v14L14 44l-5-4zM41 53V39L14 18l-5 4z" fill="#2c72bd"/><path d="M41 9l12 5v34l-12 5z" fill="#4b9be8"/></svg></div>
  <div class="app run"><svg viewBox="0 0 62 62"><path d="M5 58h12v10l-6-3-6 3z" fill="#c4463c"/><rect width="62" height="62" rx="12" fill="#a24744"/><path d="M3 8v46" stroke="#7f302e" stroke-width="2"/><text x="34" y="41" class="ga">가</text></svg></div>
  <div class="app run big"><svg viewBox="0 0 78 78"><rect width="78" height="78" rx="12" fill="#66d1dd"/><path d="M20 58l20 20h26q12 0 12-12V42L58 22 42 56z" fill="#4499a4"/><text x="17" y="58" class="rlogo" font-size="54">R</text></svg></div>
  <div class="app run big"><svg viewBox="0 0 78 78"><rect width="78" height="78" rx="12" fill="#66d1dd"/><path d="M15 51l27 27h24q12 0 12-12V42L52 18 38 44z" fill="#4499a4"/><path d="M38 78q2-38 40-40v28q0 12-12 12z" fill="#7d8275"/><text x="13" y="51" class="rlogo" font-size="46">R</text><g fill="none" stroke="#66d1dd" stroke-width="5"><path d="M42 78q2-32 36-36M53 78q2-21 25-24"/></g><circle cx="71" cy="71" r="7" fill="#66d1dd"/></svg></div>
  <i class="sep"></i>
  <div class="app"><svg class="thumb" viewBox="0 0 74 52"><rect y="6" width="74" height="35" fill="#e9e9e7"/><path d="M0 9h74" stroke="#c8c8c5" stroke-width="4" stroke-dasharray="9 3"/><rect x="11" y="13" width="63" height="27" fill="#fafafa"/><path d="M14 16h56M14 20h56M14 24h56M14 28h56M14 32h56M14 36h40" stroke="#a8a8a6" stroke-dasharray="12 3 18 6"/><use href="#finder" x="48" y="30" width="24" height="24"/></svg></div>
  <div class="app"><svg class="thumb" viewBox="0 0 74 52"><rect y="2" width="74" height="43" fill="#101114"/><rect y="2" width="74" height="5" fill="#cfd4e8"/><rect y="39" width="74" height="6" fill="#ececec"/><use href="#chrome" x="48" y="30" width="24" height="24"/></svg></div>
  <div class="app"><svg class="tall" viewBox="0 0 62 74"><path d="M4 14l54 0-7 52q-1 6-8 6H19q-7 0-8-6z" fill="#e4e5e4"/><path d="M8 14l5-8 7 3 6-8 7 6 8-7 5 9 8-1 2 8z" fill="#f7f7f5" stroke="#9b9d9c"/><path d="M22 10l5 6 3-9M38 8l5 7 5-6" stroke="#6b4a3b" fill="none" stroke-width="2"/><ellipse cx="31" cy="15" rx="27" ry="4" fill="none" stroke="#c9cbca" stroke-width="2"/><path d="M17 30l4 34M44 28l-5 38" stroke="#f6f6f6" stroke-width="5" opacity=".7"/></svg></div>
</footer>
</body>
</html>
```
FILE: styles.css
```css
* { box-sizing: border-box; }

body {
  margin: 0;
  height: 100vh;
  display: flex;
  flex-direction: column;
  overflow: hidden;
  background: linear-gradient(90deg, #12180f, #1c2415 20%, #17120c 30%, #241a12 50%, #0d1210 62%, #101512 85%, #2a1d12 90%, #12181a);
  font-family: "Liberation Sans", "Noto Sans CJK KR", sans-serif;
}

button, input, select { font: inherit; }
button { border: 0; padding: 0; background: none; color: inherit; }
a { color: inherit; text-decoration: none; }
svg { display: block; flex: none; }
.defs { position: absolute; width: 0; height: 0; }

/* system menu bar */
.menubar {
  flex: 0 0 74px;
  margin-bottom: 2px;
  display: flex;
  justify-content: space-between;
  align-items: center;
  padding: 0 33px 2px 38px;
  background: linear-gradient(90deg, #4e5043, #4b4f40 60%, #3a4034);
  color: #fff;
  fill: #fff;
  font: 26px Inter, "Noto Sans CJK KR", sans-serif;
}
.menubar-left { display: flex; align-items: center; gap: 42px; }
.menubar-left .apple { margin-right: -4px; }
.menubar svg { overflow: visible; filter: drop-shadow(0 3px 3px rgba(0, 0, 0, .25)); }
.status { display: flex; align-items: center; gap: 38px; }
.status time { font-size: 25px; font-weight: 500; }
.battery { margin: 0 -3px; }
.wifi { margin-right: 4px; }
.line { fill: none; stroke: #fff; stroke-width: 3; stroke-linecap: round; }
.line.thin { stroke-width: 2; opacity: .5; }
.line.thin-full { stroke-width: 2; }
.line.wide { stroke-width: 4; }
.rlogo { font-family: Inter, sans-serif; font-weight: 900; font-style: italic; fill: #fff; }

/* window */
.window {
  position: relative;
  flex: 1;
  min-height: 0;
  display: flex;
  flex-direction: column;
  border-radius: 20px;
  overflow: hidden;
  background: #e6f0ff;
}
.window::after {
  content: "";
  position: absolute;
  inset: auto 0 0;
  height: 110px;
  background: linear-gradient(transparent, rgba(0, 0, 0, .11));
  pointer-events: none;
  z-index: 9;
}
.titlebar {
  position: relative;
  flex: 0 0 56px;
  display: flex;
  align-items: center;
  justify-content: center;
  background: #efefef;
}
.titlebar h1 { margin: 0; padding-bottom: 2px; font: 700 26px Inter, sans-serif; color: #3f3f3f; }
.lights { position: absolute; left: 16px; display: flex; gap: 16px; }
.lights i { width: 24px; height: 24px; border-radius: 50%; border: 1px solid rgba(0, 0, 0, .1); }
.red { background: #ec6a5e; }
.amber { background: #f4bf4f; }
.green { background: #61c554; }

.appbar {
  flex: 0 0 96px;
  display: flex;
  align-items: center;
  padding-left: 19px;
  background: #5f94f8;
  border-top: 2px solid #3f78d9;
  border-bottom: 2px solid #5f94f8;
  color: #fff;
  font-size: 22px;
  font-weight: 700;
}
.appbar button { padding: 0 25px 5px 24px; }
.appbar .lang { display: flex; align-items: center; gap: 7px; padding: 0 20px 0 0; }
.appbar .last { height: 68px; border-right: 2px dashed rgba(0, 0, 0, .15); padding-right: 41px; margin-right: 24px; }
.project {
  width: 384px;
  height: 66px;
  padding: 0 16px 6px;
  border: 2px dashed rgba(0, 0, 0, .15);
  border-radius: 8px;
  background: rgba(255, 255, 255, .25);
  color: #fff;
  font-size: 24px;
}

.workarea { flex: 1; min-height: 0; display: flex; }

/* stage column */
.left { flex: 0 0 993px; min-height: 0; display: flex; flex-direction: column; padding: 10px 13px 0 16px; }
.stage-tools { flex: none; display: flex; justify-content: flex-end; gap: 6px; padding-right: 4px; margin-bottom: 10px; }
.tool { display: grid; place-items: center; width: 68px; height: 68px; background: #fff; border: 2px solid #d9d9d9; border-radius: 8px; }
.tool-group { display: flex; width: 204px; border: 2px solid #d9d9d9; border-radius: 8px; overflow: hidden; }
.tool-group .tool { flex: 1; height: 64px; border: 0; border-radius: 0; }
.tool-group .tool + .tool { border-left: 2px solid #d9d9d9; }
.stage { flex: none; position: relative; aspect-ratio: 4 / 3; background: #fff; border: 2px solid #c3ccdd; border-radius: 16px; }
.monitor {
  position: absolute;
  display: flex;
  align-items: center;
  gap: 8px;
  height: 43px;
  padding: 0 5px 0 10px;
  border: 2px solid #c3ccdd;
  border-radius: 8px;
  background: #e6f0ff;
  font-size: 23px;
  line-height: 36px;
  font-weight: 700;
  white-space: nowrap;
}
.monitor output { width: 80px; height: 32px; line-height: 32px; border-radius: 8px; background: #70acd1; color: #fff; text-align: center; font-weight: 400; }
.m1 { left: 10px; top: 10px; }
.m2 { left: 0; top: 60px; }
.m3 { left: 8px; top: 110px; }
.m4 { left: 4px; top: 166px; }
.m5 { left: 6px; top: 208px; }
.stage-foot { flex: 0 0 90px; display: flex; align-items: center; gap: 24px; padding: 0 16px 0 14px; }
.grow { flex: 1; }

.sprites { flex: 1; min-height: 0; display: flex; flex-direction: column; border: 2px solid #c3ccdd; border-bottom: 0; border-radius: 16px 16px 0 0; overflow: hidden; }
.sprite-tabs { flex: 0 0 81px; display: flex; background: #fff; border-bottom: 2px solid #d0d4dc; }
.sprite-tabs button { flex: 1; font-size: 24px; padding-bottom: 4px; border-bottom: 10px solid transparent; }
.sprite-tabs .on { border-color: #5f94f8; }
.sprite-body { flex: 1; min-height: 0; display: flex; }
.sprite-list { flex: 1; display: flex; justify-content: flex-end; align-items: flex-end; padding: 0 25px 12px; border-bottom: 2px solid #c3ccdd; }
.add-sprite { display: grid; place-items: center; width: 104px; height: 104px; border: 8px solid #b3cdfb; border-radius: 50%; background: #5f94f8; }
.add-sprite svg { margin: -8px 0 0 8px; }
.props { flex: 0 0 255px; display: grid; grid-template-columns: 104px 102px; column-gap: 16px; align-content: start; padding: 25px 0 0 15px; background: #fff; border-left: 2px solid #d0d4dc; color: #575e75; font-size: 19px; line-height: 28px; }
.props label { margin-bottom: 13px; }
.props .wide-field, .visible { grid-column: 1 / -1; }
.props input { display: block; width: 100%; height: 64px; margin-top: 8px; border: 2px solid #d9d9d9; border-radius: 32px; background: #fafafa; text-align: center; font-weight: 700; }
.props .wide-field input { text-align: left; padding: 0 24px; }
.props b, .props span { display: block; height: 28px; }
.props ::placeholder { color: #7a7a7a; }
.visible { padding-top: 10px; }
.eyes { display: flex; margin-top: 8px; border: 2px solid #d9d9d9; border-radius: 8px; }
.eyes button { flex: 1; height: 60px; display: grid; place-items: center; }
.eyes button + button { border-left: 3px solid #d9d9d9; }

/* editor */
.editor { flex: 1; min-width: 0; display: flex; flex-direction: column; }
.tabs { flex: 0 0 88px; display: flex; align-items: flex-end; }
.tabs button {
  display: flex;
  align-items: center;
  gap: 11px;
  width: 173px;
  height: 68px;
  padding: 0 0 2px 45px;
  margin-left: -16px;
  border: 2px solid #bcc2ce;
  border-bottom: 0;
  border-radius: 34px 34px 0 0;
  background: #dbe2f0;
  color: #7f859a;
  font-size: 22px;
  font-weight: 700;
  position: relative;
  z-index: 1;
}
.tabs button:nth-child(2) { z-index: 2; }
.tabs .on { height: 77px; margin-left: 0; background: #fff; color: #5f94f8; border-color: #d9d9d9; z-index: 3; }
.panel { flex: 1; min-height: 0; display: flex; border-top: 2px solid #d0d4dc; border-right: 2px solid #c3ccdd; }

.cats { flex: 0 0 123px; display: flex; flex-direction: column; background: #fff; border: solid #d0d4dc; border-width: 0 2px; color: #575e75; font-size: 19px; }
.cats a { flex: none; height: 94px; padding-top: 12px; display: flex; flex-direction: column; align-items: center; gap: 2px; line-height: 28px; white-space: nowrap; }
.cats a.on { background: #e9edf3; }
.cats a.on svg { margin: 6px 0; }
.cats i { width: 40px; height: 40px; border-radius: 50%; background: var(--c); border: 2px solid var(--s); }
.extend { flex: none; margin: auto -2px 0; height: 108px; padding-bottom: 4px; display: grid; place-items: center; background: #5f94f8; box-shadow: 0 -16px 22px rgba(0, 0, 0, .18); clip-path: inset(-30px 0 0 0); }

.palette {
  position: relative;
  flex: 0 0 500px;
  min-width: 0;
  padding-right: 5px;
  border-right: 2px solid #d0d4dc;
  background: #f9f9f9 radial-gradient(circle, #efefef 1px, transparent 2px) -12px -27px / 54px 54px;
}
.list { height: 100%; width: 494px; overflow: hidden; padding-left: 14px; }
.group { display: flex; flex-direction: column; align-items: flex-start; gap: 26px; margin-bottom: 57px; }
.group:first-child { margin-top: -16px; }
.scroll, .vbar, .hbar { position: absolute; border-radius: 6px; background: rgba(0, 0, 0, .2); z-index: 4; }
.scroll { right: 10px; top: 67px; width: 12px; height: 658px; }

/* block colours: fill, stroke, field */
.motion { --c: #5f94f8; --s: #4474c7; --f: #4f7fd0; }
.looks { --c: #9268f6; --s: #7450c2; --f: #7e5bcc; }
.sound { --c: #bf67ca; --s: #aa4cb5; --f: #b855c2; }
.cats .sound { --c: #c662d0; }
.event { --c: #f4c443; --s: #c59b3b; }
.cats .event { --c: #f7d84c; }
.control { --c: #f2ae45; --s: #c78f3c; }
.sense { --c: #70acd1; --s: #4f8fbb; --f: #60a3cd; }
.sense2 { --c: #6cb9df; --s: #4590bd; }
.ops { --c: #68b95a; --s: #4b8c3d; }
.vars { --c: #ee9039; --s: #cb7129; }
.mine { --c: #ec6e80; --s: #e9566a; }

.block, .row, .foot, .hat {
  position: relative;
  display: flex;
  align-items: center;
  gap: 11px;
  height: 77px;
  padding: 0 12px 0 11px;
  border: 1px solid var(--s);
  border-radius: 5px;
  background: var(--c);
  color: #fff;
  font-size: 20px;
  font-weight: 700;
  white-space: nowrap;
}
.block { width: max-content; --above: #f9f9f9; }
.block > .board { margin-top: 12px; }
.board { width: 51px; height: 38px; }
.bump { position: absolute; left: 15px; bottom: -12px; width: 49px; height: 12px; fill: var(--c); z-index: 2; }
.bump.top { top: -1px; bottom: auto; fill: var(--above); }
.edge { fill: none; stroke: var(--s); stroke-width: 1; }
.block hr, .hex hr { width: 1px; height: 56px; margin: 0; border: 0; background: var(--s); opacity: .7; }

.block select, .hex select, .matrix {
  appearance: none;
  height: 44px;
  padding: 0 41px 0 15px;
  border: 1px solid var(--s);
  border-radius: 22px;
  color: #fff;
  font-size: 22px;
  font-weight: 700;
  background: var(--f) url("data:image/svg+xml,%3Csvg xmlns='http://www.w3.org/2000/svg' viewBox='0 0 16 11'%3E%3Cpath d='M2 0h12q3 1 1 3.500L9.500 10q-1.500 1-3 0L1 3.500Q-1 1 2 0z' fill='white'/%3E%3C/svg%3E") right 16px center / 15px 10px no-repeat;
}
.hex select { padding: 0 39px 0 15px; }
.block .sq, .hex .sq, .block .matrix { border-radius: 5px; background-color: transparent; }
.block .ko, .hex .ko { font-size: 20px; }
.block .empty { width: 64px; }
.hex .op { width: 77px; }
.block .matrix { display: flex; align-items: center; width: 147px; height: 58px; padding: 0 0 0 5px; background-position: right 12px center; }
.block input, .hex input {
  width: 54px;
  height: 44px;
  padding: 0;
  border: 1px solid var(--s);
  border-radius: 22px;
  background: #fff;
  color: #575e75;
  font-size: 22px;
  font-weight: 700;
  text-align: center;
}
.block input.w2 { width: 62px; }
.block input.w3 { width: 66px; }

.canvas {
  position: relative;
  flex: 1;
  min-width: 0;
  overflow: hidden;
  border-bottom: 2px solid #c3ccdd;
  background: #f9f9f9 radial-gradient(circle, #d8d8d8 1px, transparent 2px) -25px -27px / 54px 54px;
}
.script { position: absolute; width: max-content; }
.s1 { left: 110px; top: 109px; }
.s2 { left: 1020px; top: 255px; }
.s2 .row, .s2 .foot, .s2 .block { width: 400px; }
.hat { width: 165px; height: 66px; padding: 0 11px 0 12px; gap: 14px; border-top-left-radius: 0; }
.dome { position: absolute; left: -1px; bottom: 64px; width: 130px; height: 23px; fill: var(--c); }
.c { display: flex; flex-direction: column; --above: #f2ae45; margin-top: -1px; }
.c.forever { --above: #f4c443; }
.c.first { --above: #f9f9f9; margin-top: 0; }
.c .c, .mouth { --above: #f2ae45; }
.mouth .block { --above: #f2ae45; }
.forever > .row { width: 216px; height: 66px; padding-left: 10px; }
.forever > .foot { width: 216px; height: 45px; justify-content: flex-end; }
.row { padding: 0 12px 0 10px; }
.mouth { position: relative; z-index: 1; display: flex; margin: -1px 0; }
.mouth::before { content: ""; flex: none; width: 21px; margin: -5px 0; background: var(--c); border-left: 1px solid var(--s); }
.foot { height: 44px; }
.stack > :first-child { margin-top: 0; }

.hex {
  --hexagon: polygon(0 50%, 33px 0, calc(100% - 33px) 0, 100% 50%, calc(100% - 33px) 100%, 33px 100%);
  position: relative;
  flex: 1 0 auto;
  display: flex;
  align-items: center;
  gap: 11px;
  height: 66px;
  margin-left: 5px;
  padding: 0 33px 0 34px;
  background: var(--s);
  clip-path: var(--hexagon);
}
.hex::before { content: ""; position: absolute; inset: 1px 2px; z-index: -1; background: var(--c); clip-path: var(--hexagon); }

.code { position: absolute; right: 0; top: 80px; width: 64px; height: 60px; padding-left: 21px; border-radius: 30px 0 0 30px; background: #f2ae45; }
.zoom { position: absolute; right: 42px; bottom: 42px; display: flex; flex-direction: column; gap: 16px; }
.zoom button { display: grid; place-items: center; width: 72px; height: 72px; border: 4px solid #d9d9d9; border-radius: 50%; background: #fff; }
.vbar { right: 2px; top: 381px; width: 12px; height: 893px; }
.hbar { left: 238px; bottom: 2px; width: 575px; height: 12px; }

/* dock */
.dock {
  flex: 0 0 100px;
  display: flex;
  justify-content: space-between;
  align-items: center;
  margin: 6px 63px 10px 64px;
  padding: 0 18px 6px 15px;
  border: 1px solid rgba(255, 255, 255, .3);
  border-radius: 28px;
  background: linear-gradient(90deg, #6b7660, #5f6c66 20%, #6e7862 34%, #696a62 44%, #6c6259 60%, #8a8b85 67%, #5f6c69 74%, #6c7165 85%, #8b7a65 91%, #5d605e 97%);
}
.app { position: relative; width: 62px; height: 62px; display: flex; align-items: center; justify-content: center; }
.app > svg { width: 62px; height: 62px; overflow: visible; filter: drop-shadow(0 1px 2px rgba(0, 0, 0, .35)); }
.big > svg { width: 78px; height: 78px; }
.app > .thumb { width: 74px; height: 52px; }
.app > .tall { width: 62px; height: 74px; }
.run::after { content: ""; position: absolute; left: 27px; bottom: -18px; width: 8px; height: 8px; border-radius: 50%; background: #000; }
.app.big > svg { width: 78px; height: 78px; }
.badge { position: absolute; right: -10px; top: -10px; width: 30px; height: 30px; border-radius: 50%; background: #e04b3e; color: #fff; text-align: center; font: 400 20px/30px Inter, sans-serif; }
.sep { width: 2px; height: 72px; margin: 0 8px; background: rgba(0, 0, 0, .3); }
.cal, .day, .talk, .ga { text-anchor: middle; fill: #fff; font-family: Inter, "Noto Sans CJK KR", sans-serif; }
.cal { font-size: 14px; font-weight: 600; }
.day { font-size: 38px; font-weight: 300; fill: #222; }
.talk { font-size: 15px; font-weight: 800; fill: #f8e14b; }
.ga { font-size: 34px; }
.prompt { font: 700 16px "Liberation Mono", monospace; fill: #fff; }
```
